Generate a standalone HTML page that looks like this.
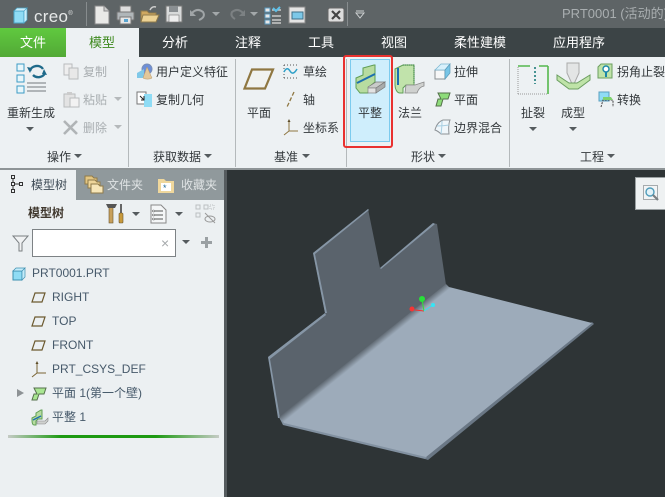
<!DOCTYPE html>
<html><head><meta charset="utf-8">
<style>
html,body{margin:0;padding:0;width:665px;height:497px;overflow:hidden;background:#2e3436;}
body{position:relative;font-family:"Liberation Sans","Noto Sans CJK SC",sans-serif;font-size:12px;color:#3a3f42;}
.a{position:absolute;white-space:nowrap;}
.t{position:absolute;white-space:nowrap;line-height:16px;font-size:12px;color:#33383b;}
.g{color:#a9aeb1;}
.tab{position:absolute;top:28px;height:29px;line-height:29px;font-size:13px;color:#fff;white-space:nowrap;}
.sep{position:absolute;top:59px;width:1px;height:108px;background:#b4b9bb;}
.dn{position:absolute;width:0;height:0;border-left:4px solid transparent;border-right:4px solid transparent;border-top:4px solid #555b5e;}
svg{position:absolute;overflow:visible;}
.tree{position:absolute;left:52px;font-size:12px;line-height:16px;color:#46596a;white-space:nowrap;}
</style></head><body>
<!-- title bar -->
<div class="a" style="left:0;top:0;width:665px;height:28px;background:#5e6466;"></div>
<svg style="left:12px;top:6px" width="18" height="18"><path d="M2 5h10v12H2z" fill="#8fdcf5" stroke="#4aa5c8"/><path d="M2 5l3-3h10l-3 3zM12 5l3-3v12l-3 3z" fill="#cbeefa" stroke="#4aa5c8" stroke-width=".7"/></svg>
<div class="a" style="left:34px;top:3px;font-size:17px;line-height:22px;color:#e6e8e8;letter-spacing:.3px">creo<span style="font-size:6px;vertical-align:7px">®</span></div>
<div class="a" style="left:86px;top:2px;width:1px;height:24px;background:#878c8e;"></div>
<svg style="left:94px;top:5px" width="16" height="20"><path d="M1 1h9l5 5v13H1z" fill="#e9e9e7" stroke="#888"/><path d="M10 1v5h5" fill="#ccc" stroke="#888"/></svg>
<svg style="left:116px;top:5px" width="20" height="20"><rect x="4" y="1" width="11" height="7" fill="#ddd" stroke="#777"/><rect x="1" y="7" width="17" height="8" rx="1" fill="#b0b6b9" stroke="#777"/><rect x="4" y="12" width="11" height="7" fill="#e6e6e6" stroke="#777"/><rect x="8" y="14" width="4" height="3" fill="#5aa5d0"/></svg>
<svg style="left:140px;top:4px" width="20" height="20"><path d="M1 7h6l2 2h7v9H1z" fill="#cfa860" stroke="#8f7a4a"/><path d="M3 11h16l-3 7H1z" fill="#ecd294" stroke="#8f7a4a"/><path d="M10 6q2-4 6-3" stroke="#ccc" stroke-width="1.500" fill="none"/></svg>
<svg style="left:165px;top:5px" width="18" height="18"><rect x="1" y="1" width="16" height="16" fill="#d8dada" stroke="#777"/><rect x="4" y="1" width="9" height="6" fill="#8a8f92"/><rect x="4" y="10" width="10" height="7" fill="#eee" stroke="#777" stroke-width=".6"/></svg>
<svg style="left:189px;top:7px" width="18" height="15"><path d="M2 7 Q8 0 14 5 Q17 10 10 13" stroke="#a0a5a7" stroke-width="2" fill="none"/><path d="M1 3v6h6z" fill="#a0a5a7"/></svg>
<div class="dn" style="left:212px;top:12px;border-top-color:#a3a8aa"></div>
<svg style="left:228px;top:7px" width="18" height="15"><path d="M16 7 Q10 0 4 5 Q2 9 7 12" stroke="#7c8183" stroke-width="2" fill="none"/><path d="M17 3v6h-6z" fill="#7c8183"/></svg>
<div class="dn" style="left:250px;top:12px;border-top-color:#a3a8aa"></div>
<svg style="left:264px;top:5px" width="18" height="20"><rect x="1" y="3" width="5" height="4" fill="#e8e8e8" stroke="#5a9ac0"/><rect x="1" y="9" width="5" height="4" fill="#e8e8e8" stroke="#5a9ac0"/><rect x="1" y="15" width="5" height="4" fill="#e8e8e8" stroke="#5a9ac0"/><path d="M8 5h9M8 11h9M8 15h9M8 18h9" stroke="#ddd" stroke-width="1.200"/><path d="M9 3l3 3 4-4" stroke="#5ec0e8" stroke-width="2" fill="none"/></svg>
<svg style="left:288px;top:6px" width="18" height="18"><rect x="1" y="1" width="16" height="16" fill="#e4e4e4" stroke="#888"/><rect x="4" y="6" width="11" height="7" fill="#7cc8e8" stroke="#3f6f88"/></svg>
<svg style="left:328px;top:8px" width="16" height="14"><rect x="0" y="0" width="16" height="14" rx="2" fill="#ddd" stroke="#666"/><path d="M4 3l8 8M12 3l-8 8" stroke="#444" stroke-width="2.200"/></svg>
<div class="a" style="left:347px;top:2px;width:1px;height:24px;background:#878c8e;"></div>
<svg style="left:355px;top:11px" width="10" height="8"><path d="M1 2h8L5 7z" fill="none" stroke="#cfd2d3"/><path d="M1 0h8" stroke="#cfd2d3"/></svg>
<div class="a" style="left:562px;top:5px;font-size:13px;line-height:18px;color:#a9aeb0;">PRT0001 (活动的)</div>
<!-- tabs -->
<div class="a" style="left:0;top:28px;width:665px;height:29px;background:#3c4446;"></div>
<div class="a" style="left:0;top:28px;width:66px;height:29px;background:linear-gradient(#60c93f,#52a936);"></div>
<div class="a" style="left:66px;top:28px;width:73px;height:29px;background:#edf1f3;"></div>
<div class="tab" style="left:20px">文件</div>
<div class="tab" style="left:89px;color:#3f8a1f">模型</div>
<div class="tab" style="left:162px">分析</div>
<div class="tab" style="left:235px">注释</div>
<div class="tab" style="left:308px">工具</div>
<div class="tab" style="left:381px">视图</div>
<div class="tab" style="left:454px">柔性建模</div>
<div class="tab" style="left:553px">应用程序</div>
<!-- ribbon -->
<div class="a" style="left:0;top:57px;width:665px;height:111px;background:#edf1f3;border-bottom:2px solid #8e9496;box-sizing:content-box;"></div>
<div class="sep" style="left:128px"></div>
<div class="sep" style="left:235px"></div>
<div class="sep" style="left:346px"></div>
<div class="sep" style="left:509px"></div>
<!-- regenerate icon -->
<svg style="left:14px;top:62px" width="34" height="34"><g fill="#e8f6fb" stroke="#3d9cc4"><rect x="3" y="2" width="7" height="7"/><rect x="3" y="13" width="7" height="7"/><rect x="3" y="24" width="7" height="7"/></g><path d="M16 9a7 6 0 0 1 13-2M31 11a7 6 0 0 1-12 2" stroke="#1f6a8a" stroke-width="2.400" fill="none"/><path d="M13 5l5 1-2 5zM33 13l-5-1 2-5z" fill="#1f6a8a"/><path d="M13 21h19M13 25h19M13 29h19" stroke="#9ba1a4" stroke-width="1.600"/></svg>
<div class="t" style="left:7px;top:105px">重新生成</div>
<div class="dn" style="left:26px;top:127px"></div>
<svg style="left:63px;top:63px" width="17" height="17"><path d="M1 1h8v11H1z" fill="#eee" stroke="#b9bcbd"/><path d="M6 5h9v11H6z" fill="#e8e8e8" stroke="#b9bcbd"/></svg>
<div class="t g" style="left:83px;top:64px">复制</div>
<svg style="left:63px;top:91px" width="17" height="17"><rect x="1" y="3" width="11" height="13" fill="#e3e3e3" stroke="#b9bcbd"/><rect x="4" y="1" width="5" height="3" fill="#ccc"/><rect x="7" y="7" width="9" height="9" fill="#f2f2f2" stroke="#b9bcbd"/></svg>
<div class="t g" style="left:83px;top:92px">粘贴</div>
<div class="dn" style="left:114px;top:97px;border-top-color:#b5b9bb"></div>
<svg style="left:63px;top:120px" width="15" height="15"><path d="M1 1l13 13M14 1L1 14" stroke="#b0b4b6" stroke-width="2.600"/></svg>
<div class="t g" style="left:83px;top:120px">删除</div>
<div class="dn" style="left:114px;top:125px;border-top-color:#b5b9bb"></div>
<div class="t" style="left:47px;top:149px">操作</div><div class="dn" style="left:74px;top:154px"></div>
<!-- get data -->
<svg style="left:136px;top:63px" width="18" height="17"><circle cx="11" cy="6" r="5" fill="#6d8fd8" stroke="#7a8fb8"/><path d="M1 10l7-4v9H1z" fill="#7fc8e8"/><path d="M11 4l5 11a5 2 0 0 1-9 0z" fill="#e2c79a" stroke="#b89a6a" stroke-width=".5"/></svg>
<div class="t" style="left:156px;top:64px">用户定义特征</div>
<svg style="left:136px;top:91px" width="17" height="17"><rect x="1" y="1" width="9" height="12" fill="#fff" stroke="#777"/><rect x="8" y="3" width="8" height="13" fill="#8fdcf5"/><path d="M4 5l4 4M8 5v4H5" stroke="#222" stroke-width="1" fill="none"/></svg>
<div class="t" style="left:156px;top:92px">复制几何</div>
<div class="t" style="left:153px;top:149px">获取数据</div><div class="dn" style="left:204px;top:154px"></div>
<!-- datum -->
<svg style="left:243px;top:68px" width="32" height="22"><path d="M9 1.500H30L22 20.500H1.500z" fill="#f0f2f0" stroke="#8f7741" stroke-width="2.200"/></svg>
<div class="t" style="left:247px;top:105px">平面</div>
<svg style="left:283px;top:64px" width="15" height="15"><path d="M1 1h13M1 14h13M1 1v13" stroke="#555" stroke-width="1" stroke-dasharray="1 2" fill="none"/><path d="M1 8q3-6 6-1t7-2" stroke="#2fa0c8" stroke-width="1.500" fill="none"/></svg>
<div class="t" style="left:303px;top:64px">草绘</div>
<svg style="left:285px;top:91px" width="12" height="17"><path d="M9 1L2 16" stroke="#8f7741" stroke-width="1.300" stroke-dasharray="4 2"/></svg>
<div class="t" style="left:303px;top:92px">轴</div>
<svg style="left:283px;top:119px" width="16" height="17"><path d="M6 1v11H15M6 12L1 16" stroke="#8f7741" stroke-width="1" fill="none"/><path d="M4.500 3L6 0l1.500 3z" fill="#5c4c28"/></svg>
<div class="t" style="left:303px;top:120px">坐标系</div>
<div class="t" style="left:274px;top:149px">基准</div><div class="dn" style="left:302px;top:154px"></div>
<!-- shapes -->
<div class="a" style="left:343px;top:55px;width:50px;height:93px;box-sizing:border-box;border:2px solid #e9312f;border-radius:3px;"></div>
<div class="a" style="left:350px;top:59px;width:40px;height:83px;box-sizing:border-box;background:#cfeefc;border:1px solid #7ccbee;"></div>
<svg style="left:354px;top:63px" width="33" height="32">
<path d="M9 5L20 2H21V19L15 24L14 30H6L2 25V15L9 12Z" fill="#b7dca0" stroke="#5f9e55"/>
<path d="M3 20L21 11" stroke="#1c6fb0" stroke-width="2"/>
<path d="M14 24L22 19H31L22 25H14Z" fill="#c9cbc9" stroke="#777" stroke-width=".7"/>
<path d="M14 25H22V30H14Z" fill="#e2e2e2" stroke="#888" stroke-width=".7"/>
<path d="M22 25L31 19V24L22 30Z" fill="#a9acac" stroke="#777" stroke-width=".7"/>
</svg>
<div class="t" style="left:358px;top:105px">平整</div>
<svg style="left:394px;top:63px" width="32" height="32"><path d="M1 6l8-4h11v20h-8l-3 3v5H6C3 30 1 26 1 22z" fill="#c1e3ab" stroke="#5f9e55"/><path d="M4 5v17" stroke="#1c6fb0" stroke-width="2"/><path d="M9 2h11v18" stroke="#2a7a3a" stroke-dasharray="1 1" fill="none"/><path d="M12 22h9l9-3v4q-5 1-7 7H11z" fill="#cfd1cf" stroke="#888" stroke-width=".8"/></svg>
<div class="t" style="left:398px;top:105px">法兰</div>
<svg style="left:434px;top:63px" width="17" height="17"><path d="M1 7h10v9H1z" fill="#f7f7f7" stroke="#8a8f92"/><path d="M1 7l6-6h9L11 7z" fill="#d8f0fb" stroke="#78b5d0" stroke-width=".7"/><path d="M11 7l5-6v9l-5 6z" fill="#78c5e6" stroke="#5a9ab8" stroke-width=".7"/></svg>
<div class="t" style="left:454px;top:64px">拉伸</div>
<svg style="left:435px;top:92px" width="16" height="15"><path d="M3 1h12l-2 6H8l-2 7H1l2-7h3z" fill="#8edc7a" stroke="#54704a"/></svg>
<div class="t" style="left:454px;top:92px">平面</div>
<svg style="left:434px;top:119px" width="17" height="16"><path d="M1 11Q3 3 9 1h7q-2 5-1 14H7q-3-3-6-4z" fill="#eff6fa" stroke="#8d9296"/><path d="M8 2q0 6-1 13M3 7q6 0 12-1" stroke="#a8cfe2" fill="none"/></svg>
<div class="t" style="left:454px;top:120px">边界混合</div>
<div class="t" style="left:411px;top:149px">形状</div><div class="dn" style="left:438px;top:154px"></div>
<!-- engineering -->
<svg style="left:517px;top:64px" width="33" height="31"><path d="M1 30h30V2M1 30V2" stroke="#999" stroke-dasharray="1 1" fill="none"/><path d="M1 2h12M22 2h9M31 2v28" stroke="#55b84e" stroke-width="1.600" fill="none"/><path d="M18 3v17" stroke="#1c7a7a" stroke-width="1.600" stroke-dasharray="2 2"/></svg>
<div class="t" style="left:521px;top:105px">扯裂</div>
<div class="dn" style="left:529px;top:127px"></div>
<svg style="left:557px;top:62px" width="33" height="32"><path d="M10 1h12v10l-6 13-6-13z" fill="#e3e5e5" stroke="#aaa"/><path d="M0 13L12 21H20L33 13V18L21 27H12L0 18Z" fill="#bfe3a8" stroke="#6b9e60"/></svg>
<div class="t" style="left:561px;top:105px">成型</div>
<div class="dn" style="left:569px;top:127px"></div>
<svg style="left:597px;top:63px" width="16" height="16"><path d="M4 1h11v14H1V4z" fill="#bfe3a8" stroke="#6b9e60"/><circle cx="9" cy="6" r="3" fill="#fff" stroke="#1c86a8" stroke-width="1.400"/><path d="M9 9v5" stroke="#1c86a8" stroke-width="2"/></svg>
<div class="t" style="left:617px;top:64px">拐角止裂</div>
<svg style="left:597px;top:91px" width="17" height="17"><path d="M2 1h10v9H2z" fill="#8fdcf5" stroke="#5aa0c0"/><path d="M4 16l2-7h10v7" fill="none" stroke="#444" stroke-dasharray="2 1"/><path d="M6 9h10l-2-3H6z" fill="#7ed26e"/></svg>
<div class="t" style="left:617px;top:92px">转换</div>
<div class="t" style="left:580px;top:149px">工程</div><div class="dn" style="left:607px;top:154px"></div>
<!-- left panel -->
<div class="a" style="left:0;top:170px;width:224px;height:327px;background:#ecf0f2;"></div>
<div class="a" style="left:224px;top:170px;width:3px;height:327px;background:#555b5e;"></div>
<div class="a" style="left:76px;top:170px;width:148px;height:30px;background:#90999c;"></div>
<svg style="left:10px;top:174px" width="15" height="20"><g fill="none" stroke="#333"><rect x="1.500" y="1.500" width="3" height="3"/><rect x="1.500" y="8.500" width="3" height="3"/><rect x="1.500" y="15.500" width="3" height="3"/><rect x="9.500" y="8.500" width="3" height="3"/><path d="M3 5v3M3 12v3M5 10h4"/></g></svg>
<div class="t" style="left:31px;top:177px;color:#3d4a55">模型树</div>
<svg style="left:84px;top:175px" width="19" height="19"><path d="M1 1h7l2 2h3v6H1z" fill="#e3c682" stroke="#8f7a4a"/><path d="M4 5h7l2 2h3v6H4z" fill="#eed59a" stroke="#8f7a4a"/><path d="M7 9h7l2 2h3v7H7z" fill="#f7e6b8" stroke="#8f7a4a"/></svg>
<div class="t" style="left:107px;top:177px;color:#dfe3e4">文件夹</div>
<svg style="left:158px;top:178px" width="16" height="15"><path d="M0 1h6l2 2h8v12H0z" fill="#efd79c"/><rect x="3" y="5" width="10" height="8" fill="#fff"/><text x="5" y="13" font-size="9" fill="#1f6a9a">*</text></svg>
<div class="t" style="left:181px;top:177px;color:#dfe3e4">收藏夹</div>
<div class="t" style="left:28px;top:205px;color:#40382e;font-weight:bold;font-size:12px">模型树</div>
<svg style="left:106px;top:203px" width="18" height="21"><rect x="3" y="3" width="4" height="17" fill="#c8a05c" stroke="#6a5530" stroke-width=".6"/><path d="M0 1h11l-2 4H2z" fill="#555"/><rect x="14" y="1" width="2" height="9" fill="#666"/><rect x="13" y="10" width="4" height="10" rx="1" fill="#c89a3c" stroke="#6a5530" stroke-width=".6"/></svg>
<div class="dn" style="left:132px;top:212px"></div>
<svg style="left:150px;top:204px" width="17" height="20"><path d="M1 1h10l5 5v13H1z" fill="#f4f6f7" stroke="#888"/><path d="M5 7h8M5 11h8M5 15h8" stroke="#555"/><circle cx="3.500" cy="7" r="1" fill="none" stroke="#555" stroke-width=".6"/><circle cx="3.500" cy="11" r="1" fill="none" stroke="#555" stroke-width=".6"/><circle cx="3.500" cy="15" r="1" fill="none" stroke="#555" stroke-width=".6"/></svg>
<div class="dn" style="left:175px;top:212px"></div>
<svg style="left:195px;top:204px" width="21" height="21"><g fill="none" stroke="#bbbfc1"><rect x="1" y="1" width="4" height="4"/><rect x="1" y="9" width="4" height="4"/><rect x="9" y="1" width="4" height="4"/><rect x="15" y="1" width="4" height="4" stroke-dasharray="1 1"/></g><ellipse cx="15" cy="15" rx="5" ry="3" fill="none" stroke="#999"/><path d="M10 9l10 10" stroke="#999"/></svg>
<svg style="left:12px;top:235px" width="17" height="17"><path d="M1 1h15l-6 7v8H7V8z" fill="#f0f2f3" stroke="#7a7f82"/></svg>
<div class="a" style="left:32px;top:229px;width:144px;height:28px;box-sizing:border-box;background:#fff;border:1px solid #7d8285;"></div>
<div class="a" style="left:161px;top:236px;font-size:14px;line-height:14px;color:#a5a9ab">×</div>
<div class="dn" style="left:182px;top:240px"></div>
<div class="a" style="left:201px;top:241px;width:11px;height:3px;background:#9aa0a3"></div>
<div class="a" style="left:205px;top:237px;width:3px;height:11px;background:#9aa0a3"></div>
<!-- tree -->
<svg style="left:12px;top:267px" width="14" height="14"><path d="M1 4h9v9H1z" fill="#8fdcf5" stroke="#3d8fb0"/><path d="M1 4l3-3h9l-3 3zM10 4l3-3v9l-3 3z" fill="#c4ecfa" stroke="#3d8fb0" stroke-width=".7"/></svg>
<div class="tree" style="left:32px;top:265px">PRT0001.PRT</div>
<svg style="left:31px;top:292px" width="15" height="11"><path d="M4 1h10l-3 9H1z" fill="none" stroke="#6c5a30" stroke-width="1.200"/></svg>
<div class="tree" style="top:289px">RIGHT</div>
<svg style="left:31px;top:316px" width="15" height="11"><path d="M4 1h10l-3 9H1z" fill="none" stroke="#6c5a30" stroke-width="1.200"/></svg>
<div class="tree" style="top:313px">TOP</div>
<svg style="left:31px;top:340px" width="15" height="11"><path d="M4 1h10l-3 9H1z" fill="none" stroke="#6c5a30" stroke-width="1.200"/></svg>
<div class="tree" style="top:337px">FRONT</div>
<svg style="left:31px;top:361px" width="16" height="17"><path d="M6 1v11H15M6 12L1 16" stroke="#7a6534" stroke-width="1" fill="none"/><path d="M4.500 3L6 0l1.500 3z" fill="#5c4c28"/></svg>
<div class="tree" style="top:361px">PRT_CSYS_DEF</div>
<div class="a" style="left:17px;top:389px;width:0;height:0;border-top:4.500px solid transparent;border-bottom:4.500px solid transparent;border-left:7px solid #8d9295"></div>
<svg style="left:31px;top:387px" width="16" height="14"><path d="M3 1h12l-2 6H8l-2 6H1l2-6h3z" fill="#a9e692" stroke="#55704c"/></svg>
<div class="tree" style="top:385px">平面 1(第一个壁)</div>
<svg style="left:31px;top:409px" width="17" height="17"><path d="M1 9l4-2V4l5-3h1v9H7l-2 2v4H3C1 16 1 13 1 11z" fill="#b7dca0" stroke="#5f9e55"/><path d="M2 11l8-4" stroke="#1c6fb0" stroke-width="1.400"/><path d="M6 12h8l3-3v3l-3 3H6z" fill="#cfd1cf" stroke="#888" stroke-width=".6"/></svg>
<div class="tree" style="top:409px">平整 1</div>
<div class="a" style="left:8px;top:435px;width:211px;height:3px;background:linear-gradient(90deg,#c5cbc5,#1d9a12 25%,#1d9a12 70%,#c5cbc5);"></div>
<!-- magnifier -->
<div class="a" style="left:635px;top:177px;width:30px;height:33px;box-sizing:border-box;background:#eef1f2;border:1px solid #9aa0a2;border-right:0;"></div>
<svg style="left:643px;top:185px" width="17" height="17"><rect x=".5" y=".5" width="14" height="14" fill="#f2f4f5" stroke="#a5aaad"/><circle cx="7" cy="7" r="4" fill="#e3f2f8" stroke="#4f9cba" stroke-width="1.400"/><path d="M10 10l5 5" stroke="#7a7f82" stroke-width="2.200"/></svg>
<!-- model -->
<svg style="left:0;top:0" width="665" height="497">
<defs><linearGradient id="f" gradientUnits="userSpaceOnUse" x1="362" y1="350" x2="366.500" y2="355.600"><stop offset="0" stop-color="#5a636c"/><stop offset="1" stop-color="#9dabba"/></linearGradient></defs>
<path d="M268 357L325 313L313 253L368 209L380 268L433 223L437 224L446 285L280 418Z" fill="#5a636c"/>
<path d="M268 357L325 313L326 315L270 359L280 418L278 418Z" fill="#8696a6"/>
<path d="M313 253L368 209L369 210L315 254L327 313L325 313Z" fill="#8696a6"/>
<path d="M380 268L433 223L435 224L381 269Z" fill="#8696a6"/>
<path d="M592 322L594 324L428 460L425 459L420 450Z" fill="#6a7785"/>
<path d="M279 417L283 425L425 459L427 457L300 415Z" fill="#8291a1"/>
<path d="M446 284L449 287L592 323L426 457L284 423L279 417Z" fill="url(#f)"/>
<path d="M415 310L424 311" stroke="#f03030" stroke-width="1"/>
<path d="M422 300L424 311" stroke="#2fe03a" stroke-width="1"/>
<path d="M424 311L433 305" stroke="#35e0f0" stroke-width="1"/>
<circle cx="412" cy="309" r="2.500" fill="#f53535"/>
<circle cx="422" cy="299" r="3" fill="#28e038"/>
<circle cx="433" cy="305" r="2" fill="#35e5f5"/>
</svg>
</body></html>
